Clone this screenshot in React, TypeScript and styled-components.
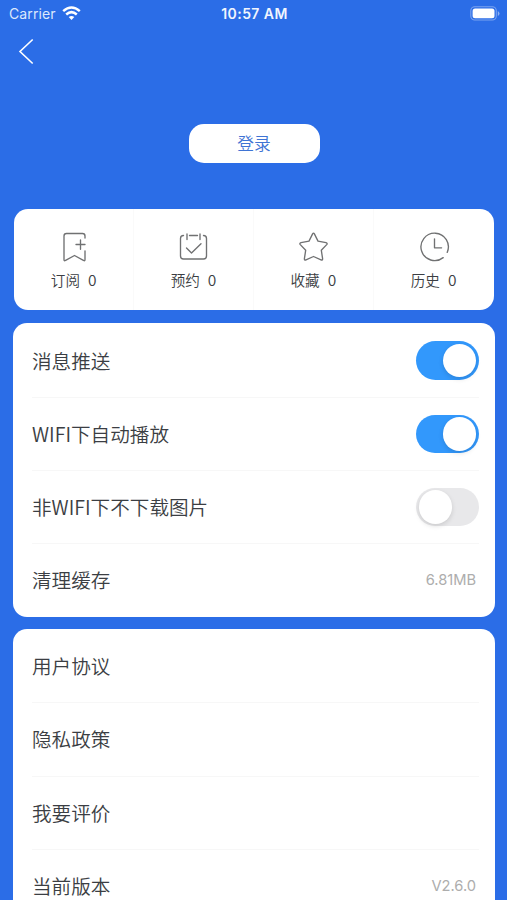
import React, { useState } from 'react';
import styled, { createGlobalStyle } from 'styled-components';

const GlobalStyle = createGlobalStyle`
  * { box-sizing: border-box; }
  html, body { margin: 0; height: 900px; overflow: hidden; background: #2b6de7; }
`;

const Screen = styled.div`
  width: 507px;
  height: 900px;
  overflow: hidden;
  display: flex;
  flex-direction: column;
  background: #2b6de7;
  font-family: 'Noto Sans CJK SC', sans-serif;
  font-weight: 350;
  color: #3b3e43;
`;

const StatusBar = styled.header`
  display: grid;
  grid-template-columns: 1fr auto 1fr;
  align-items: center;
  flex: none;
  height: 27px;
  padding: 0 7px 0 9px;
  color: #fff;
  font-family: Inter, sans-serif;
  font-weight: 400;
  font-size: 14px;
  line-height: 27px;
`;

const Carrier = styled.div`
  display: flex;
  align-items: center;
  gap: 6px;
  letter-spacing: 0.1px;
  color: #dce8fc;
`;

const Clock = styled.div`
  font-size: 14px;
  font-weight: 600;
  letter-spacing: 0.42px;
  color: #f0f5fe;
`;

const BatteryIcon = styled.svg`
  display: block;
  justify-self: end;
`;

const NavBar = styled.nav`
  flex: none;
  height: 49px;
  padding: 11px 0 0 18px;
`;

const BackButton = styled.button`
  display: block;
  border: 0;
  padding: 0;
  background: none;
  line-height: 0;
`;

const LoginButton = styled.button`
  flex: none;
  align-self: center;
  width: 131px;
  height: 39px;
  margin: 48px 0 0 1px;
  padding: 0;
  border: 0;
  border-radius: 15px;
  background: #fff;
  color: #3f74d4;
  font: 350 16.7px/39px 'Noto Sans CJK SC', sans-serif;
`;

const StatsCard = styled.section`
  display: grid;
  grid-template-columns: repeat(4, 1fr);
  flex: none;
  height: 101.3px;
  margin: 45.7px 13.5px 0 14.3px;
  border-radius: 14px;
  background: #fff;
`;

const Stat = styled.div`
  display: flex;
  flex-direction: column;
  align-items: center;
  padding-top: 22px;
  border-right: 1px solid #fafafa;

  &:last-child { border-right: 0; }
`;

const StatLabel = styled.div`
  display: flex;
  align-items: baseline;
  gap: 8px;
  margin-top: 5px;
  font-size: 14.6px;
  line-height: 22px;
`;

const StatCount = styled.span`
  font-size: 15.5px;
`;

const StatIcon = styled.svg`
  display: block;
  fill: none;
  stroke: #707172;
  stroke-width: 1.35;
  stroke-linecap: round;
  stroke-linejoin: round;
`;

const Card = styled.section<{ $gap: number }>`
  flex: none;
  height: 293.2px;
  margin: ${({ $gap }) => $gap}px 12.4px 0 13.3px;
  padding: 0 16px 0 18.7px;
  border-radius: 14px;
  background: #fff;
`;

const Row = styled.div`
  display: flex;
  align-items: center;
  justify-content: space-between;
  height: 73.3px;
  border-top: 1px solid #f7f7f7;

  &:first-child { border-top-color: transparent; }
`;

const RowLabel = styled.span`
  font-size: 19.6px;
  line-height: 30px;
`;

const RowValue = styled.span`
  padding-right: 2.5px;
  color: #adadad;
  font-family: Inter, sans-serif;
  font-weight: 400;
  font-size: 14.7px;
`;

const Toggle = styled.button<{ $on: boolean }>`
  display: flex;
  align-items: center;
  justify-content: ${({ $on }) => ($on ? 'flex-end' : 'flex-start')};
  width: 62.5px;
  height: 38.5px;
  padding: 2.4px;
  border: 0;
  border-radius: 20px;
  background: ${({ $on }) => ($on ? '#3298fc' : '#e8e8ea')};
`;

const Knob = styled.span`
  width: 33.6px;
  height: 33.6px;
  border-radius: 50%;
  background: #fff;
  box-shadow: 0 2px 5px rgba(0, 0, 0, 0.13);
`;

const StarPath =
  'M14.6 1.9Q15.5 .3 16.4 1.9L20 9.1L28 10.7Q29.8 11.2 28.7 12.6L23.3 18.2L24.6 26.7Q24.7 28.5 23 27.8L15.5 24.5L8 27.8Q6.3 28.5 6.4 26.7L7.7 18.2L2.3 12.6Q1.2 11.2 3 10.7L11 9.1Z';

const stats: { label: string; icon: React.ReactNode }[] = [
  {
    label: '订阅',
    icon: (
      <>
        <path d="M26 7V5Q26 2.5 23.5 2.5H7.5Q5 2.5 5 5V28.5Q5 30.5 6.6 29.3L15.5 24.5L24.4 29.3Q26 30.5 26 28.5V19.8" />
        <path d="M17 13.5H26M21.5 9V18.2" />
      </>
    ),
  },
  {
    label: '预约',
    icon: (
      <>
        <path d="M5.5 4.5Q2.5 4.5 2.5 7.5V25Q2.5 28 5.5 28H25.5Q28.5 28 28.5 25V7.5Q28.5 4.5 25.5 4.5M11.5 4.5H19.5" />
        <path d="M9 3V8.5M22 3V8.5M8.5 17L13.5 22L23 12.8" />
      </>
    ),
  },
  { label: '收藏', icon: <path d={StarPath} transform="translate(0 1)" /> },
  {
    label: '历史',
    icon: (
      <>
        <path d="M24.2 26.6A13.7 13.7 0 1 1 28.2 21.4" />
        <path d="M15.5 7.8V16.8H22.6" />
      </>
    ),
  },
];

function StatusHeader() {
  return (
    <StatusBar>
      <Carrier>
        Carrier
        <svg width="19" height="15" viewBox="0 0 19 15" fill="none" stroke="#fff" strokeWidth="2.5">
          <path d="M1.2 5.1Q9.5 -2.2 17.8 5.1M4.2 8.5Q9.5 3.8 14.8 8.5" />
          <path d="M6.7 11.1Q9.5 8.7 12.3 11.1L9.5 14Z" fill="#fff" stroke="none" />
        </svg>
      </Carrier>
      <Clock>10:57 AM</Clock>
      <BatteryIcon width="30" height="15" viewBox="0 0 30 15">
        <rect x=".8" y=".8" width="25.5" height="13.2" rx="4" fill="none" stroke="#7ba3ef" strokeWidth="1.1" />
        <rect x="2.6" y="2.6" width="21.9" height="9.6" rx="2.5" fill="#fff" />
        <path d="M27.8 5V10Q29.5 9 29.5 7.5T27.8 5Z" fill="#8db0f2" />
      </BatteryIcon>
    </StatusBar>
  );
}

function ToggleRow({ label, initial }: { label: string; initial: boolean }) {
  const [on, setOn] = useState(initial);
  return (
    <Row>
      <RowLabel>{label}</RowLabel>
      <Toggle $on={on} role="switch" aria-checked={on} aria-label={label} onClick={() => setOn(!on)}>
        <Knob />
      </Toggle>
    </Row>
  );
}

function InfoRow({ label, value }: { label: string; value?: string }) {
  return (
    <Row>
      <RowLabel>{label}</RowLabel>
      {value && <RowValue>{value}</RowValue>}
    </Row>
  );
}

export default function App() {
  return (
    <Screen>
      <GlobalStyle />
      <StatusHeader />
      <NavBar>
        <BackButton aria-label="返回">
          <svg width="16" height="27" viewBox="0 0 16 27" fill="none" stroke="#fff" strokeWidth="1.6">
            <path d="M14.7 1.5L2 13.5L14.7 25.5" />
          </svg>
        </BackButton>
      </NavBar>
      <LoginButton>登录</LoginButton>
      <StatsCard>
        {stats.map(({ label, icon }) => (
          <Stat key={label}>
            <StatIcon width="32" height="32" viewBox="-1 0 32 32">{icon}</StatIcon>
            <StatLabel>
              <span>{label}</span>
              <StatCount>0</StatCount>
            </StatLabel>
          </Stat>
        ))}
      </StatsCard>
      <Card $gap={13.4}>
        <ToggleRow label="消息推送" initial />
        <ToggleRow label="WIFI下自动播放" initial />
        <ToggleRow label="非WIFI下不下载图片" initial={false} />
        <InfoRow label="清理缓存" value="6.81MB" />
      </Card>
      <Card $gap={12.4}>
        <InfoRow label="用户协议" />
        <InfoRow label="隐私政策" />
        <InfoRow label="我要评价" />
        <InfoRow label="当前版本" value="V2.6.0" />
      </Card>
    </Screen>
  );
}
